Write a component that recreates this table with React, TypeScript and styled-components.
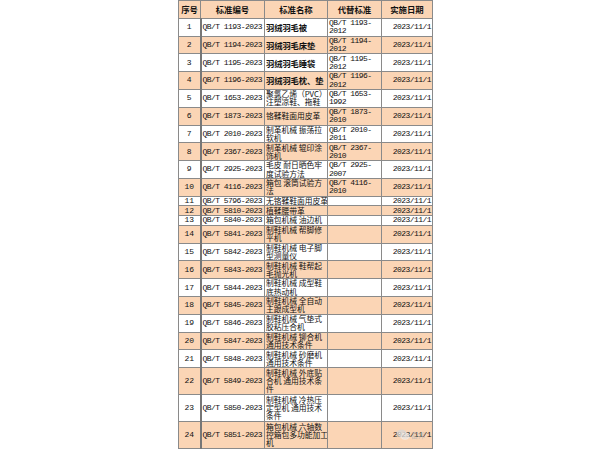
import React from 'react';
import styled, { createGlobalStyle } from 'styled-components';

const GlobalStyle = createGlobalStyle`
  html, body {
    margin: 0;
    padding: 0;
    background: #ffffff;
  }
`;

type Row = {
  no: number;
  code: string;
  name: string[];
  old?: string[];
  size: 'n' | 's' | 't';
  bold?: boolean;
};

const rows: Row[] = [
  { no: 1, code: 'QB/T 1193-2023', name: ['羽绒羽毛被'], old: ['QB/T 1193-', '2012'], size: 'n', bold: true },
  { no: 2, code: 'QB/T 1194-2023', name: ['羽绒羽毛床垫'], old: ['QB/T 1194-', '2012'], size: 'n', bold: true },
  { no: 3, code: 'QB/T 1195-2023', name: ['羽绒羽毛睡袋'], old: ['QB/T 1195-', '2012'], size: 'n', bold: true },
  { no: 4, code: 'QB/T 1196-2023', name: ['羽绒羽毛枕、垫'], old: ['QB/T 1196-', '2012'], size: 'n', bold: true },
  { no: 5, code: 'QB/T 1653-2023', name: ['聚氯乙烯（PVC）', '注塑凉鞋、拖鞋'], old: ['QB/T 1653-', '1992'], size: 'n' },
  { no: 6, code: 'QB/T 1873-2023', name: ['铬鞣鞋面用皮革'], old: ['QB/T 1873-', '2010'], size: 'n' },
  { no: 7, code: 'QB/T 2010-2023', name: ['制革机械 振荡拉', '软机'], old: ['QB/T 2010-', '2011'], size: 'n' },
  { no: 8, code: 'QB/T 2367-2023', name: ['制革机械 辊印涂', '饰机'], old: ['QB/T 2367-', '2010'], size: 'n' },
  { no: 9, code: 'QB/T 2925-2023', name: ['毛皮 耐日晒色牢', '度试验方法'], old: ['QB/T 2925-', '2007'], size: 'n' },
  { no: 10, code: 'QB/T 4116-2023', name: ['箱包 滚筒试验方', '法'], old: ['QB/T 4116-', '2010'], size: 'n' },
  { no: 11, code: 'QB/T 5796-2023', name: ['无铬鞣鞋面用皮革'], size: 's' },
  { no: 12, code: 'QB/T 5810-2023', name: ['植鞣腰带革'], size: 's' },
  { no: 13, code: 'QB/T 5840-2023', name: ['箱包机械 油边机'], size: 's' },
  { no: 14, code: 'QB/T 5841-2023', name: ['制鞋机械 帮脚修', '平机'], size: 'n' },
  { no: 15, code: 'QB/T 5842-2023', name: ['制鞋机械 电子脚', '型测量仪'], size: 'n' },
  { no: 16, code: 'QB/T 5843-2023', name: ['制鞋机械 鞋帮起', '毛抛光机'], size: 'n' },
  { no: 17, code: 'QB/T 5844-2023', name: ['制鞋机械 成型鞋', '底热动机'], size: 'n' },
  { no: 18, code: 'QB/T 5845-2023', name: ['制鞋机械 全自动', '主跟成型机'], size: 'n' },
  { no: 19, code: 'QB/T 5846-2023', name: ['制鞋机械 气垫式', '胶粘压合机'], size: 'n' },
  { no: 20, code: 'QB/T 5847-2023', name: ['制鞋机械 铆合机', '通用技术条件'], size: 'n' },
  { no: 21, code: 'QB/T 5848-2023', name: ['制鞋机械 砂磨机', '通用技术条件'], size: 'n' },
  { no: 22, code: 'QB/T 5849-2023', name: ['制鞋机械 外底贴', '合机 通用技术条', '件'], size: 't' },
  { no: 23, code: 'QB/T 5850-2023', name: ['制鞋机械 冷热压', '定型机 通用技术', '条件'], size: 't' },
  { no: 24, code: 'QB/T 5851-2023', name: ['箱包机械 六轴数', '控箱包多功能加工', '机'], size: 't' },
];

const heights = { n: 17.8, s: 9.7, t: 27 };

const PEACH = '#fbd5b5';
const LINE = '#8a8a8a';

const Page = styled.div`
  position: relative;
  padding-left: 178px;
  width: 600px;
  height: 450px;
  box-sizing: border-box;
  overflow: hidden;
`;

const Table = styled.table`
  table-layout: fixed;
  border-collapse: collapse;
  width: 254px;
  color: #111;
`;

const HeadRow = styled.tr`
  height: 17.8px;
  background: ${PEACH};
`;

const HeadCell = styled.th`
  border: 1px solid ${LINE};
  padding: 0;
  font-family: 'Noto Sans CJK SC', sans-serif;
  font-size: 8.4px;
  font-weight: 700;
  line-height: 8px;
  text-align: center;
  vertical-align: middle;
`;

const BodyRow = styled.tr<{ $h: number; $shade: boolean }>`
  height: ${({ $h }) => $h}px;
  background: ${({ $shade }) => ($shade ? PEACH : '#ffffff')};
`;

const Cell = styled.td`
  border: 1px solid ${LINE};
  padding: 0 1px;
  vertical-align: middle;
  overflow: hidden;
  white-space: nowrap;
  line-height: 8.2px;
`;

const MonoCell = styled(Cell)<{ $align: 'left' | 'center' | 'right' }>`
  font-family: 'Liberation Mono', monospace;
  font-size: 8px;
  letter-spacing: -0.55px;
  text-align: ${({ $align }) => $align};
`;

const NoCell = styled(MonoCell)`
  border-right: 2px solid #777;
  letter-spacing: 0;
`;

const NameCell = styled(Cell)<{ $bold?: boolean }>`
  font-family: 'Noto Sans CJK SC', sans-serif;
  font-size: ${({ $bold }) => ($bold ? '8.3px' : '7.8px')};
  font-weight: ${({ $bold }) => ($bold ? 700 : 400)};
  text-align: left;
  letter-spacing: ${({ $bold }) => ($bold ? '-0.1px' : '-0.05px')};
`;

const Line = styled.div`
  height: 8.2px;
  line-height: 8.2px;
`;

const Watermark = styled.div`
  position: absolute;
  left: 396px;
  top: 429px;
  display: flex;
  align-items: center;
  gap: 1px;
  opacity: 0.75;
  pointer-events: none;
`;

const MarkText = styled.span`
  font-family: 'Noto Sans CJK SC', sans-serif;
  font-size: 7px;
  color: #b5b5b5;
`;

const Bubbles = () => (
  <svg width="14" height="11" viewBox="0 0 14 11">
    <ellipse cx="5.5" cy="4.5" rx="5" ry="4" fill="#d8d8d8" />
    <ellipse cx="9" cy="7" rx="4.2" ry="3.3" fill="#e6e6e6" stroke="#ffffff" strokeWidth="0.6" />
    <circle cx="3.8" cy="4" r="0.7" fill="#ffffff" />
    <circle cx="7" cy="4" r="0.7" fill="#ffffff" />
  </svg>
);

const Lines = ({ items }: { items?: string[] }) => (
  <>
    {(items || []).map((t, i) => (
      <Line key={i}>{t}</Line>
    ))}
  </>
);

export default function App() {
  return (
    <Page>
      <GlobalStyle />
      <Table>
        <colgroup>
          <col style={{ width: 22 }} />
          <col style={{ width: 64 }} />
          <col style={{ width: 63 }} />
          <col style={{ width: 54 }} />
          <col style={{ width: 51 }} />
        </colgroup>
        <thead>
          <HeadRow>
            <HeadCell>序号</HeadCell>
            <HeadCell>标准编号</HeadCell>
            <HeadCell>标准名称</HeadCell>
            <HeadCell>代替标准</HeadCell>
            <HeadCell>实施日期</HeadCell>
          </HeadRow>
        </thead>
        <tbody>
          {rows.map((r) => (
            <BodyRow key={r.no} $h={heights[r.size]} $shade={r.no % 2 === 0}>
              <NoCell $align="center">{r.no}</NoCell>
              <MonoCell $align="left">{r.code}</MonoCell>
              <NameCell $bold={r.bold}>
                <Lines items={r.name} />
              </NameCell>
              <MonoCell $align="left">
                <Lines items={r.old} />
              </MonoCell>
              <MonoCell $align="right">2023/11/1</MonoCell>
            </BodyRow>
          ))}
        </tbody>
      </Table>
      <Watermark>
        <Bubbles />
        <MarkText>富邦</MarkText>
      </Watermark>
    </Page>
  );
}
